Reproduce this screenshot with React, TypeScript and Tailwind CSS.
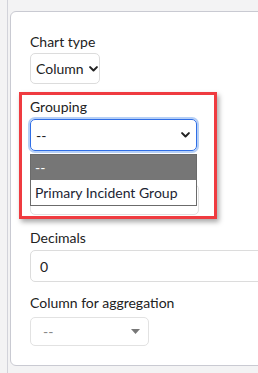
import React from 'react';

function Chevron() {
  return (
    <svg width="9" height="6" viewBox="0 0 9 6" className="shrink-0">
      <path d="M1.1 1.1 L4.5 4.5 L7.9 1.1" fill="none" stroke="#222" strokeWidth="2" strokeLinecap="round" strokeLinejoin="round" />
    </svg>
  );
}

function Caret() {
  return (
    <svg width="9" height="5" viewBox="0 0 9 5" className="shrink-0">
      <path d="M0 0 H9 L4.5 5 Z" fill="#777" />
    </svg>
  );
}

function Label({ children }: { children?: React.ReactNode }) {
  return <div className="h-5 text-[14px] leading-5 text-[#222]">{children}</div>;
}

export default function App() {
  return (
    <div
      className="relative w-[258px] h-[373px] overflow-hidden bg-[#f3f3f4] flex"
      style={{ fontFamily: 'Lato, "Noto Sans", sans-serif' }}
    >
      <div className="w-[8px] shrink-0 border-r border-[#d2d3da]" />
      <div className="pl-[2px] pt-[11px]">
        <div className="w-[320px] h-[355px] bg-white border border-[#c9cad2] rounded-[6px] pl-[19px] pt-[20px] flex flex-col">
          {/* Chart type */}
          <Label>Chart type</Label>
          <div className="mt-[1px] w-[70px] h-[31px] rounded-[5px] border border-[#dcdcdc] flex items-center gap-[5px] pl-[5px] text-[14px] text-[#222]">
            <span>Column</span>
            <Chevron />
          </div>

          {/* Grouping */}
          <div className="mt-[13px] relative">
            <Label>Grouping</Label>
            <div className="mt-[2px] w-[167px] h-[32px] rounded-[5px] border border-[#2f6ee6] ring-[2px] ring-[#b5cff6] flex items-center justify-between pl-[5px] pr-[6px] text-[14px] text-[#222]">
              <span>--</span>
              <Chevron />
            </div>
            <div className="absolute left-0 top-[57px] w-[167px] z-20 bg-white border border-[#6b6b6b] text-[14px]">
              <div className="h-[25px] bg-[#767676] text-white flex items-center pl-[4px]">--</div>
              <div className="h-[25px] text-[#1c2433] flex items-center pl-[4px]">Primary Incident Group</div>
            </div>
          </div>

          {/* field hidden behind the open list */}
          <div className="mt-[13px]">
            <Label />
            <div className="w-[169px] h-[31px] rounded-[5px] border border-[#e2e2e2]" />
          </div>

          {/* Decimals */}
          <div className="mt-[13px]">
            <Label>Decimals</Label>
            <div className="mt-[2px] w-[300px] h-[32px] rounded-[5px] border border-[#dcdcdc] flex items-center pl-[9px] text-[14px] text-[#222]">
              0
            </div>
          </div>

          {/* Column for aggregation */}
          <div className="mt-[11px]">
            <Label>Column for aggregation</Label>
            <div className="mt-[4px] w-[119px] h-[29px] rounded-[5px] border border-[#e2e2e2] flex items-center justify-between pl-[12px] pr-[8px] text-[14px] text-[#888]">
              <span>--</span>
              <Caret />
            </div>
          </div>
        </div>
      </div>

      {/* annotation */}
      <div className="absolute left-[19px] top-[92px] w-[198px] h-[127px] border-[3px] border-[#ef3b40] z-30 shadow-[2px_3px_5px_rgba(0,0,0,0.35)] pointer-events-none" />
    </div>
  );
}
